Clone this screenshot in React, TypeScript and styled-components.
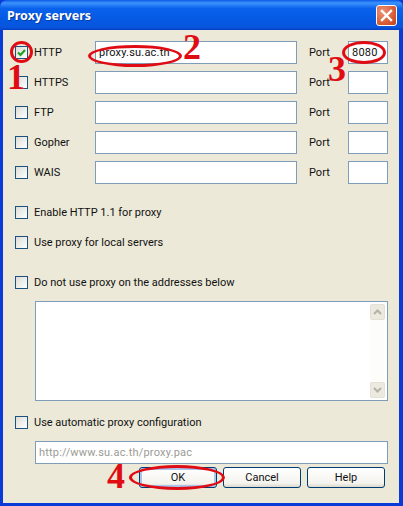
import React from 'react'
import styled, { createGlobalStyle } from 'styled-components'

const protocols = [
  { name: 'HTTP', host: 'proxy.su.ac.th', port: '8080', checked: true },
  { name: 'HTTPS', host: '', port: '', checked: false },
  { name: 'FTP', host: '', port: '', checked: false },
  { name: 'Gopher', host: '', port: '', checked: false },
  { name: 'WAIS', host: '', port: '', checked: false },
]

const marks = [
  { digit: '1', x: 7, y: 57 },
  { digit: '2', x: 183, y: 27 },
  { digit: '3', x: 328, y: 49 },
  { digit: '4', x: 107, y: 456 },
]

const rings = [
  { x: 10, y: 41, w: 23, h: 22 },
  { x: 88, y: 45, w: 94, h: 22 },
  { x: 342, y: 41, w: 44, h: 23 },
  { x: 129, y: 465, w: 96, h: 25 },
]

export default function App() {
  return (
    <Window>
      <GlobalStyle />
      <TitleBar>
        <Title>Proxy servers</Title>
        <CloseButton>
          <svg width="13" height="13" viewBox="0 0 13 13">
            <path d="M2 2l9 9M11 2l-9 9" stroke="#fff" strokeWidth="2.4" strokeLinecap="square" />
          </svg>
        </CloseButton>
      </TitleBar>
      <Body>
        <Protocols>
          {protocols.map(p => (
            <ProtocolRow key={p.name}>
              <Option>
                <CheckBox checked={p.checked} />
                <span>{p.name}</span>
              </Option>
              <Field readOnly value={p.host} />
              <PortLabel>Port</PortLabel>
              <Field readOnly value={p.port} />
            </ProtocolRow>
          ))}
        </Protocols>
        <Option $top={21}><CheckBox /><span>Enable HTTP 1.1 for proxy</span></Option>
        <Option $top={16}><CheckBox /><span>Use proxy for local servers</span></Option>
        <Option $top={26}><CheckBox /><span>Do not use proxy on the addresses below</span></Option>
        <AddressBox>
          <ScrollBar>
            <ScrollButton>
              <svg width="9" height="6" viewBox="0 0 9 6"><path d="M1 5l3.5-3.5L8 5" fill="none" stroke="#b4b2a4" strokeWidth="2" /></svg>
            </ScrollButton>
            <ScrollButton>
              <svg width="9" height="6" viewBox="0 0 9 6"><path d="M1 1l3.5 3.5L8 1" fill="none" stroke="#b4b2a4" strokeWidth="2" /></svg>
            </ScrollButton>
          </ScrollBar>
        </AddressBox>
        <Option $top={14}><CheckBox /><span>Use automatic proxy configuration</span></Option>
        <UrlField readOnly value="http://www.su.ac.th/proxy.pac" />
        <Buttons>
          <Button $focused>OK</Button>
          <Button>Cancel</Button>
          <Button>Help</Button>
        </Buttons>
      </Body>
      {rings.map(r => (
        <Ring key={r.x} style={{ left: r.x, top: r.y, width: r.w, height: r.h }} />
      ))}
      {marks.map(m => (
        <Mark key={m.digit} style={{ left: m.x, top: m.y }}>{m.digit}</Mark>
      ))}
    </Window>
  )
}

const CheckBox = ({ checked }: { checked?: boolean }) => (
  <Box>
    {checked && (
      <svg width="11" height="11" viewBox="0 0 11 11">
        <path d="M2 5.5l2.5 2.5L9 3" fill="none" stroke="#21a121" strokeWidth="2.2" />
      </svg>
    )}
  </Box>
)

const GlobalStyle = createGlobalStyle`
  html, body {
    margin: 0;
    padding: 0;
  }
`

const Window = styled.div`
  position: relative;
  width: 403px;
  height: 506px;
  box-sizing: border-box;
  display: flex;
  flex-direction: column;
  background: #0a3ad8;
  padding: 0 4px 3px 3px;
  overflow: hidden;
  font-family: Roboto, "Noto Sans", sans-serif;
  font-size: 11px;
  color: #111;
`

const TitleBar = styled.div`
  height: 30px;
  margin: 0 -4px 0 -3px;
  padding: 0 7px;
  display: flex;
  align-items: center;
  justify-content: space-between;
  border-radius: 7px 7px 0 0;
  background: linear-gradient(180deg, #0a5ae6 0%, #3d93fb 10%, #0a62ec 28%, #0458e2 70%, #0a55de 90%, #0340c4 100%);
`

const Title = styled.div`
  color: #fff;
  font-family: "Noto Sans", sans-serif;
  font-weight: 700;
  font-size: 12.5px;
  text-shadow: 1px 1px 0 #0b3a9a;
`

const CloseButton = styled.div`
  width: 19px;
  height: 19px;
  margin-right: -1px;
  border: 1px solid #fff;
  border-radius: 3px;
  display: flex;
  align-items: center;
  justify-content: center;
  background: radial-gradient(circle at 30% 30%, #ec9277, #d4562d 70%, #b8401d);
`

const Body = styled.div`
  flex: 1;
  background: #ece9d8;
  padding: 11px 11px 0 12px;
`

const Protocols = styled.div`
  display: flex;
  flex-direction: column;
  gap: 7px;
`

const ProtocolRow = styled.div`
  display: grid;
  grid-template-columns: 80px 202px 51px 40px;
  height: 23px;
  align-items: center;
`

const Option = styled.div<{ $top?: number }>`
  display: flex;
  align-items: center;
  gap: 6px;
  height: 14px;
  margin-top: ${p => p.$top ?? 0}px;
`

const Box = styled.span`
  width: 11px;
  height: 11px;
  flex: none;
  border: 1px solid #1c5180;
  display: flex;
  align-items: center;
  justify-content: center;
  background: linear-gradient(135deg, #dcdcd7, #ffffff);
`

const Field = styled.input`
  box-sizing: border-box;
  width: 100%;
  height: 23px;
  margin: 0;
  padding: 0 3px;
  border: 1px solid #7f9db9;
  outline: none;
  background: #fff;
  font: inherit;
  letter-spacing: 0.2px;
  color: #111;
`

const PortLabel = styled.span`
  padding-left: 12px;
`

const AddressBox = styled.div`
  box-sizing: border-box;
  height: 100px;
  margin: 12px 0 0 20px;
  border: 1px solid #7f9db9;
  background: #fff;
  display: flex;
  justify-content: flex-end;
`

const ScrollBar = styled.div`
  width: 15px;
  margin: 2px 2px 2px 0;
  display: flex;
  flex-direction: column;
  justify-content: space-between;
  background: #fdfdfa;
`

const ScrollButton = styled.div`
  height: 16px;
  display: flex;
  align-items: center;
  justify-content: center;
  border: 1px solid #e4e1d4;
  border-radius: 2px;
  box-sizing: border-box;
  background: #ece9e0;
`

const UrlField = styled(Field)`
  display: block;
  width: auto;
  min-width: calc(100% - 20px);
  margin: 12px 0 0 20px;
  color: #9b9b94;
`

const Buttons = styled.div`
  display: flex;
  justify-content: flex-end;
  gap: 6px;
  margin: 3px 3px 0 0;
`

const Button = styled.div<{ $focused?: boolean }>`
  box-sizing: border-box;
  width: 78px;
  height: 21px;
  border: 1px solid #003c74;
  border-radius: 3px;
  display: flex;
  align-items: center;
  justify-content: center;
  background: linear-gradient(180deg, #ffffff 0%, #f4f3ee 80%, #dcd8ca 100%);
  box-shadow: ${p => (p.$focused ? 'inset 0 0 0 2px #a9c6ee' : 'none')};
`

const Ring = styled.div`
  position: absolute;
  box-sizing: border-box;
  border: 3px solid #e00c14;
  border-radius: 50%;
`

const Mark = styled.div`
  position: absolute;
  font-family: "Liberation Serif", serif;
  font-weight: 700;
  font-size: 36px;
  line-height: 40px;
  color: #e00c14;
`
